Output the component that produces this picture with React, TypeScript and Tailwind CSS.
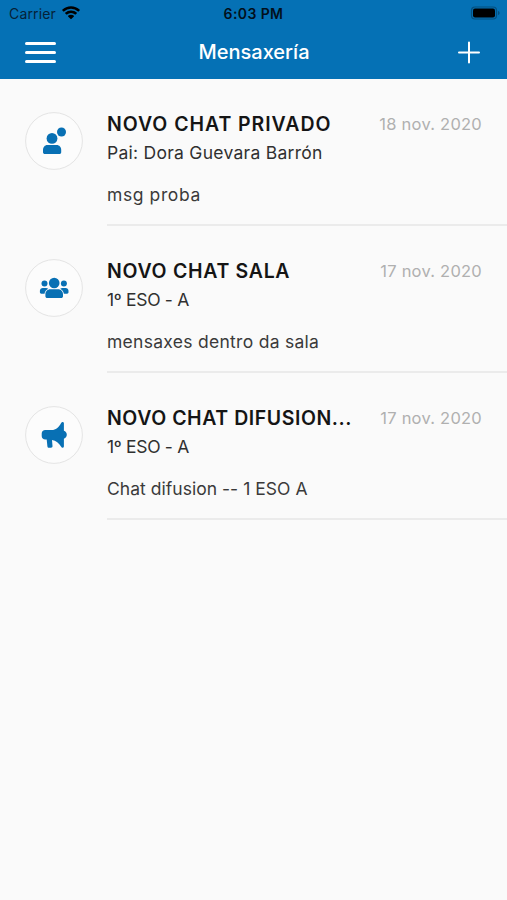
import React from 'react';
import { clsx } from 'clsx';

type ChatKind = 'private' | 'room' | 'broadcast';

interface Chat {
  kind: ChatKind;
  title: string;
  titleClass: string;
  subtitle: string;
  subtitleClass: string;
  message: string;
  messageClass: string;
  date: string;
}

const chats: Chat[] = [
  {
    kind: 'private',
    title: 'NOVO CHAT PRIVADO',
    titleClass: 'tracking-[0.95px]',
    subtitle: 'Pai: Dora Guevara Barrón',
    subtitleClass: 'tracking-[0.27px]',
    message: 'msg proba',
    messageClass: 'tracking-[0.6px]',
    date: '18 nov. 2020'
  },
  {
    kind: 'room',
    title: 'NOVO CHAT SALA',
    titleClass: 'tracking-[0.7px]',
    subtitle: '1º ESO - A',
    subtitleClass: 'tracking-[-0.3px]',
    message: 'mensaxes dentro da sala',
    messageClass: 'tracking-[0.28px]',
    date: '17 nov. 2020'
  },
  {
    kind: 'broadcast',
    title: 'NOVO CHAT DIFUSION...',
    titleClass: 'tracking-[0.56px]',
    subtitle: '1º ESO - A',
    subtitleClass: 'tracking-[-0.3px]',
    message: 'Chat difusion -- 1 ESO A',
    messageClass: 'tracking-[0.03px]',
    date: '17 nov. 2020'
  }
];

const ChatIcon: React.FC<{ kind: ChatKind }> = ({ kind }) => (
  <svg className="block size-[58px] shrink-0 text-[#0870b4]" viewBox="0 0 58 58" fill="currentColor">
    <circle cx="29" cy="29" r="28.4" fill="#fcfcfc" stroke="#e4e4e4" strokeWidth="1" />
    {kind === 'private' && (
      <>
        <circle cx="27" cy="26.4" r="5.4" />
        <circle cx="36.5" cy="20" r="4.5" />
        <path d="M22.4 33h9.2c2.8 0 4.6 2.3 4.6 5v2.2c0 1.1-.8 1.9-1.9 1.9H19.9c-1.1 0-1.9-.8-1.9-1.9V38c0-2.7 1.8-5 4.4-5z" />
      </>
    )}
    {kind === 'room' && (
      <>
        <circle cx="29.2" cy="24" r="5.3" />
        <circle cx="19.5" cy="24.6" r="3" />
        <circle cx="38.9" cy="24.6" r="3" />
        <path d="M25.4 30.3h7.6c2.9 0 5 2.2 5 5v2c0 1-.8 1.800-1.800 1.800h-14c-1 0-1.800-.8-1.800-1.800v-2c0-2.800 2.100-5 5-5z" />
        <path d="M17.8 28.900h3.200c.9 0 1.600.3 2.200.8-2 1-3.400 2.800-3.700 5h-3.200c-.8 0-1.400-.6-1.400-1.400v-1.500c0-1.600 1.300-2.900 2.900-2.900z" />
        <path d="M40.600 28.900h-3.200c-.9 0-1.600.3-2.200.8 2 1 3.400 2.800 3.700 5h3.200c.8 0 1.400-.6 1.400-1.400v-1.500c0-1.600-1.300-2.900-2.900-2.900z" />
      </>
    )}
    {kind === 'broadcast' && (
      <path d="M20.2 24h6.600c3.900 0 7-2.700 9.200-6.800.5-.9 1-1.300 1.600-1.300.8 0 1.300.6 1.300 1.400v7.500c1.700.6 2.900 2.100 2.900 3.900s-1.200 3.400-2.900 4v7.500c0 .9-.5 1.500-1.300 1.500-.6 0-1.100-.4-1.600-1.200-2-3.500-5-6-9-6.600l.5 6.200c.1 1-.5 1.600-1.500 1.600h-2c-.9 0-1.500-.5-1.600-1.500l-.7-6.600h-1.500c-2 0-3.500-1.500-3.500-3.500v-2.600c0-2 1.500-3.500 3.500-3.500z" />
    )}
  </svg>
);

const StatusBar: React.FC = () => (
  <div className="grid h-[27px] grid-cols-3 items-center px-[9px] text-[#052238]">
    <div className="flex items-center gap-[6px] text-sm leading-none">
      <span className="tracking-[0.15px]">Carrier</span>
      <svg className="-mt-px h-[14px] w-[18px] text-black" viewBox="0 0 18 14" fill="currentColor">
        <path d="M9 .2c3.400 0 6.500 1.300 8.800 3.500.2.200.2.400 0 .6l-1.200 1.200c-.2.200-.4.200-.6 0A10 10 0 0 0 9 2.700a10 10 0 0 0-7 2.800c-.2.200-.4.200-.6 0L.2 4.300c-.2-.2-.2-.4 0-.6A12.700 12.700 0 0 1 9 .2z" />
        <path d="M9 4.400c2.300 0 4.300.9 5.900 2.300.2.200.2.400 0 .6l-1.300 1.300c-.2.200-.4.200-.6 0A6 6 0 0 0 9 7a6 6 0 0 0-4 1.600c-.2.200-.4.200-.6 0L3.100 7.300c-.2-.2-.2-.4 0-.6A8.700 8.700 0 0 1 9 4.400z" />
        <path d="M9 8.700c1.100 0 2.100.4 2.900 1.100.2.200.2.400 0 .6l-2.600 2.600c-.2.200-.4.200-.6 0l-2.600-2.600c-.2-.2-.2-.4 0-.6.800-.7 1.800-1.100 2.900-1.100z" />
      </svg>
    </div>
    <span className="pt-px text-center text-[14px] leading-none font-semibold tracking-[0.4px] whitespace-nowrap text-[#02101c]">
      6:03 PM
    </span>
    <svg className="-mr-[4px] -mt-px h-[14px] w-[32px] justify-self-end" viewBox="0 0 32 14">
      <rect x="1.5" y="1" width="25" height="12" rx="3.5" fill="none" stroke="#05507f" strokeWidth="1.2" />
      <rect x="3" y="2.5" width="22" height="9" rx="2" fill="#000" />
      <path d="M28 5c1 .3 1.600 1.100 1.600 2S29 8.700 28 9z" fill="#05507f" />
    </svg>
  </div>
);

const ChatRow: React.FC<{ chat: Chat }> = ({ chat }) => (
  <li className="flex h-[147px] pl-[25px]">
    <div className="mr-6 pt-[33px]">
      <ChatIcon kind={chat.kind} />
    </div>
    <div className="flex-1 border-b-2 border-[#ebebeb] pt-[33px] whitespace-nowrap">
      <div className="flex items-center justify-between pr-[25px]">
        <h2 className={clsx('text-[19.5px] leading-6 font-semibold text-[#151515]', chat.titleClass)}>{chat.title}</h2>
        <span className="text-[16.5px] leading-6 text-[#b0b0b0] tracking-[0.24px]">{chat.date}</span>
      </div>
      <p className={clsx('mt-[5px] text-[17.5px] leading-6 text-[#303030]', chat.subtitleClass)}>{chat.subtitle}</p>
      <p className={clsx('mt-[18px] text-[17.5px] leading-6 text-[#3a3a3a]', chat.messageClass)}>{chat.message}</p>
    </div>
  </li>
);

export default function App() {
  return (
    <div className="min-h-screen bg-[#fafafa] font-['Inter',sans-serif]">
      <header className="h-[79px] bg-[#0571b5]">
        <StatusBar />
        <div className="grid h-[50px] grid-cols-3 items-center pr-[26px] pl-[27px]">
          <button aria-label="Menu" className="-ml-[2px] flex w-[31px] flex-col gap-[6px]">
            <span className="h-[3px] rounded-full bg-white" />
            <span className="h-[3px] rounded-full bg-white" />
            <span className="h-[3px] rounded-full bg-white" />
          </button>
          <h1 className="text-center text-[20px] leading-6 font-medium text-white">Mensaxería</h1>
          <button aria-label="Novo" className="justify-self-end">
            <svg className="block size-[23px]" viewBox="0 0 23 23" stroke="#fff" strokeWidth="2" strokeLinecap="round">
              <path d="M11 1.500v20M1 11.500h20" />
            </svg>
          </button>
        </div>
      </header>
      <ul>
        {chats.map(chat => (
          <ChatRow key={chat.title} chat={chat} />
        ))}
      </ul>
    </div>
  );
}
